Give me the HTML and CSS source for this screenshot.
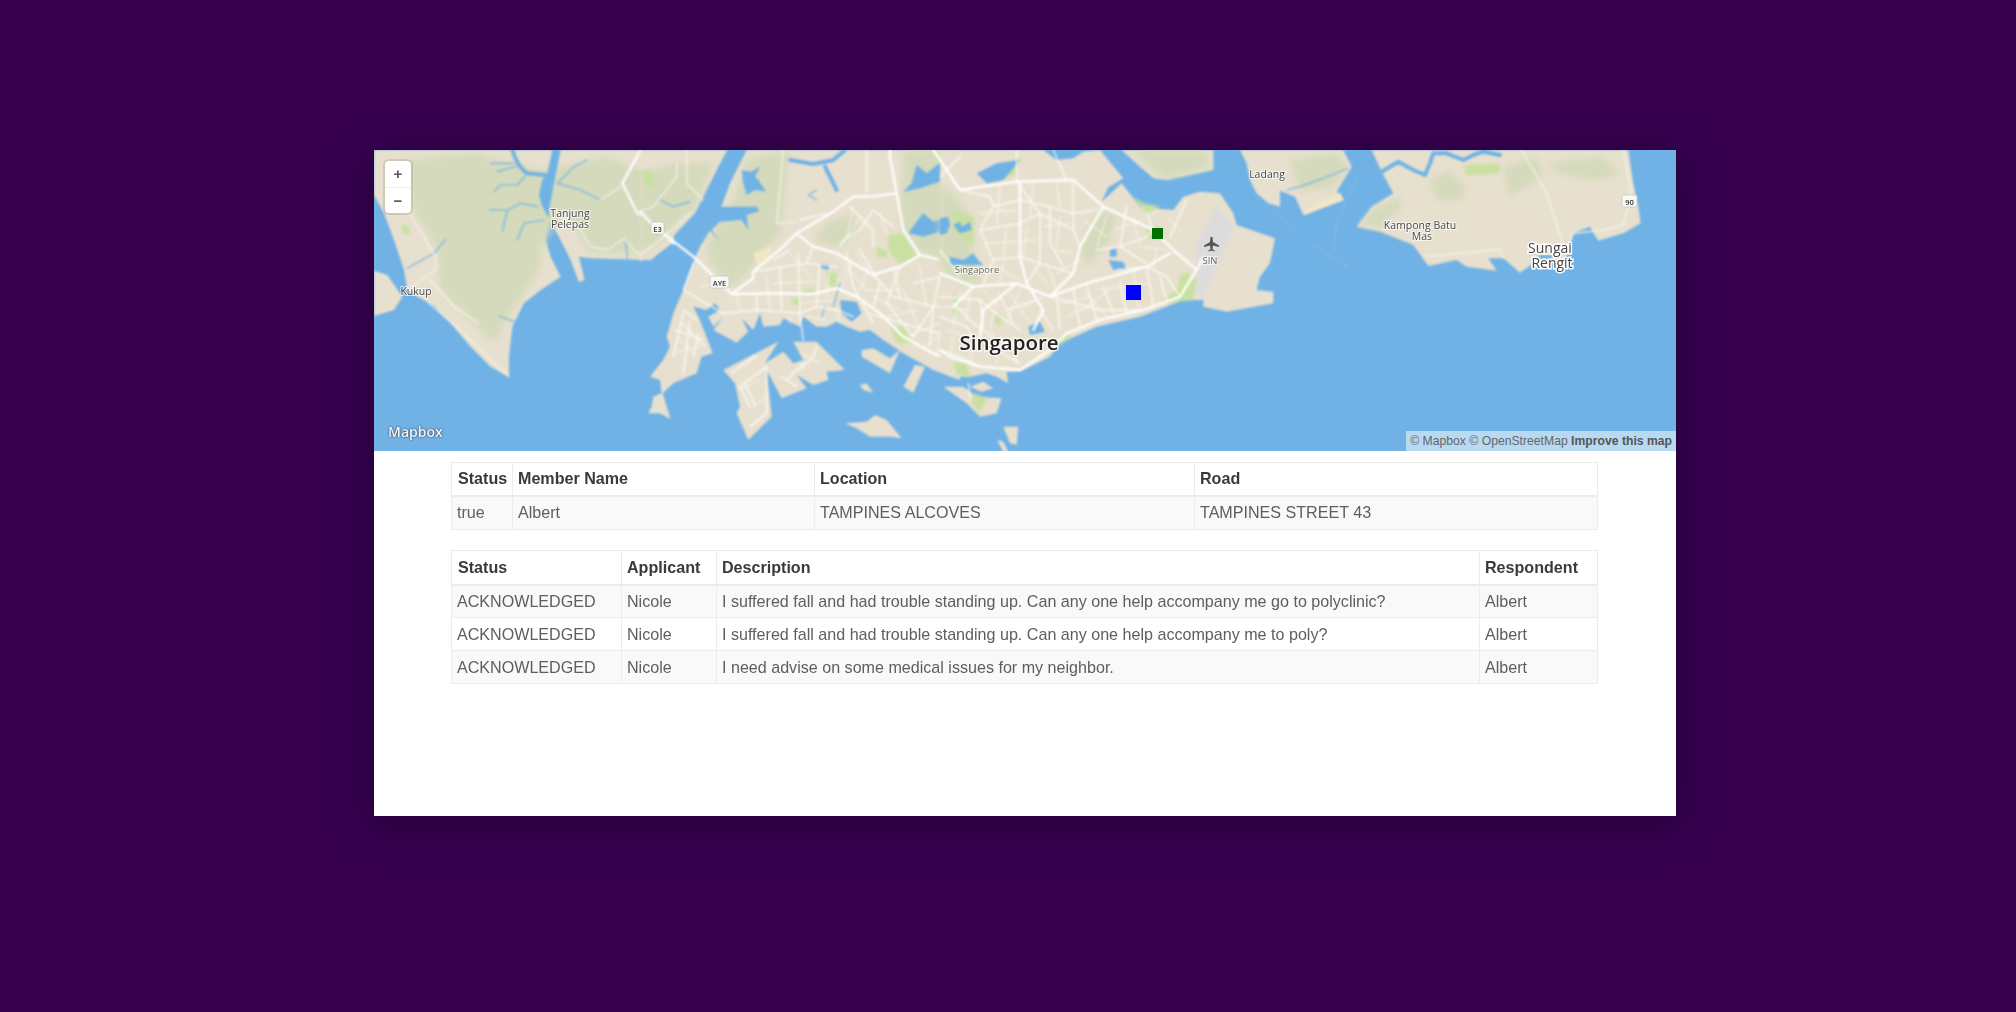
FILE: index.html
```html
<!DOCTYPE html>
<html>
<head>
    <title>Community map</title>
    <link rel="stylesheet" href="styles.css">
</head>
<body>
    <div class="card">
        <div class="map">
            <svg class="map-art" viewBox="374 150 1302 301" width="1302" height="301">
                <g class="map-shapes">
                <rect class="water" x="374" y="150" width="1302" height="301"/>

                <!-- west johor, zoom coords -->
                <g transform="translate(374 150) scale(.3333)">
                    <polygon class="land" points="0,0 900,0 900,275 830,330 650,325 615,320 632,390 615,397 590,330 555,260 520,200 515,270 530,320 560,380 500,420 450,460 415,530 405,620 405,682 350,650 290,590 230,520 180,465 130,440 100,420 90,360 60,270 30,190 0,135"/>
                    <polygon class="land" points="0,362 40,375 85,440 60,480 0,498"/>
                    <polygon class="veg" points="100,30 300,10 500,60 700,20 890,100 880,250 820,310 650,310 600,230 560,180 500,300 500,350 440,440 400,500 360,580 300,520 200,420 190,300 120,180"/>
                    <polygon class="park" points="785,70 830,60 840,105 820,110"/>
                    <polygon class="park" points="80,225 100,225 110,250 92,255"/>
                    <polygon class="water" points="520,70 535,0 560,0 540,100 525,180 525,205 505,170 495,135 505,90"/>
                    <path class="river-lg" d="M415 0Q430 50 460 70L515 75"/>
                    <path class="river" d="M460 70L430 105 380 105 360 125M420 40L350 40M440 45L370 65M490 170L440 160 400 180 345 180M400 180L385 245M510 210L450 220 430 270M550 100L600 50 640 30M550 100L620 120 680 150M215 268L180 310 100 355M375 498L420 515M755 270L760 325"/>
                    <path class="road-soft" d="M110 195L185 320 185 360 140 390 110 415M170 390L240 470 315 520M150 445L290 570 405 680M620 240L650 290 700 300 750 265 790 310 900 220M620 240L560 200M680 150L740 110"/>
                    <path class="road" d="M800 0L745 100 790 190 900 280"/>
                </g>

                <!-- singapore west, zoom coords -->
                <g transform="translate(640 150) scale(.3333)">
                    <polygon class="land" points="0,0 262,0 230,60 165,190 60,300 0,335"/>
                    <polygon class="veg" points="0,70 100,40 220,40 165,170 60,280 0,310"/>
                    <polygon class="land" points="160,335 130,420 100,490 80,560 90,590 70,630 30,680 60,690 65,730 40,740 35,770 25,790 60,790 92,808 68,730 100,700 170,670 185,620 218,610 180,510 160,470 200,480 225,460 240,480 205,500 220,530 250,500 220,540 290,578 325,545 305,505 340,540 360,490 370,530 420,525 430,505 480,530 490,500 530,530 560,530 590,515 620,530 660,545 690,540 730,570 790,610 880,660 960,690 960,0 320,0 270,100 230,210 180,290"/>
                    <polygon class="land" points="250,660 415,575 375,640 430,605 460,640 490,630 460,575 530,575 615,660 560,665 565,690 520,705 470,675 500,715 425,745 380,660 395,800 325,870 290,790 300,770 285,700"/>
                    <polygon class="land" points="665,600 700,595 750,625 780,600 750,670 665,620"/>
                    <polygon class="land" points="825,645 855,650 820,728 790,710"/>
                    <polygon class="land" points="660,705 680,700 700,728 670,720"/>
                    <polygon class="land" points="615,820 680,815 705,795 740,810 785,865 750,860 690,860 650,835"/>
                    <polygon class="veg" points="200,280 280,150 320,30 450,0 420,250 330,360 280,410 210,340"/>
                    <polygon class="veg" points="790,0 960,0 960,340 880,320 830,300 780,230"/>
                    <polygon class="veg" points="560,220 640,190 650,240 600,290 520,270"/>
                    <polygon class="sand" points="340,310 400,285 380,340 350,350"/>
                    <polygon class="park" points="0,60 30,60 45,105 20,110"/>
                    <polygon class="park" points="745,255 790,250 830,320 780,345 745,300"/>
                    <polygon class="park" points="920,180 960,180 960,280 930,270"/>
                    <polygon class="park" points="708,290 735,300 745,322 712,322"/>
                    <polygon class="park" points="455,445 480,445 480,465 458,465"/>
                    <polygon class="park" points="490,420 525,415 520,430 490,432"/>
                    <polygon class="park" points="560,360 590,370 590,410 565,405"/>
                    <polygon class="park" points="750,530 790,530 820,580 770,580"/>
                    <polygon class="park" points="895,620 950,625 945,640 900,635"/>
                    <polygon class="park" points="940,650 960,640 960,670 945,670"/>
                    <polygon class="water" points="305,60 335,65 360,50 345,80 355,90 378,125 345,120 320,135 310,100"/>
                    <polygon class="water" points="240,170 350,170 358,183 320,195 325,240 305,210 240,215 215,240 240,275 190,220"/>
                    <polygon class="water" points="790,125 815,100 830,45 860,70 905,35 915,90 840,115"/>
                    <polygon class="water" points="805,250 830,215 850,190 880,215 930,200 915,240 850,260"/>
                    <polygon class="water" points="600,450 650,455 665,490 635,515 605,490"/>
                    <polygon class="water" points="540,340 570,345 565,360 545,355"/>
                    <polygon class="water" points="930,325 960,320 960,345 940,345"/>
                    <path class="river-lg" d="M450 30L520 42 580 30 615 0M555 50L590 120"/>
                    <path class="river" d="M530 120L505 135 530 150M600 400L580 470M555 470L545 500M60 150L100 170 150 155"/>
                    <path class="road-soft" d="M140 0L140 100 190 150M110 40L110 80 40 170 0 185M0 315L60 270 150 190M430 0L410 220 470 215"/>
                    <path class="road-sm" d="M130 480L170 510M105 540L190 570M130 490L100 620M150 510L130 670M175 550L160 620M125 520L195 590M345 615L275 670M380 650L300 710 330 770M380 650L380 790 330 830M315 700L345 765M490 640L440 690 420 680M530 590L520 620 480 660M440 690L470 710M160 340L130 420 250 490 350 480 480 490 530 470 590 480 640 500M340 365L430 350 500 340 590 350M420 350L425 480M475 310L480 500 490 570M520 290L500 340M350 430L350 485M540 340L530 470M600 290L610 270 660 240 700 180 760 230M630 170L700 240 700 290M620 310L640 410 700 520M660 300L720 400 700 470M780 350L740 460 820 560M820 400L900 380 960 400M760 440L880 470 960 470M820 560L880 470 900 380M690 490L960 570M880 470L870 590M400 330L450 300M680 0L680 130M760 350L780 440M700 375L760 440M480 210L560 190"/>
                    <path class="road-fine" d="M380 380L390 480M450 310L510 380M400 400L530 395M290 430L300 480M480 460L580 450M570 350L560 440M610 340L680 420M620 360L590 400M640 340L600 420M650 310L690 370M690 350L660 420M680 420L780 420M700 440L780 480M740 500L830 480M790 420L840 540M840 350L860 470M900 330L920 470M930 400L940 520M800 560L900 520M850 590L960 520M890 610L900 540M180 410L240 400M200 360L270 420M450 500L450 520M500 500L560 510M590 480L600 520M110 560L170 620M100 610L180 590M350 620L310 650M300 720L360 690M340 770L380 740M480 610L540 640M640 170L620 260M660 200L610 280M720 190L740 250"/>
                    <path class="road" d="M0 185L50 235 160 320 275 432M275 432L430 430 520 432 590 415 650 440 720 490 790 560 880 610 960 640M275 432L340 385 340 365 430 290 470 250 580 185 640 140 690 140 770 130M770 130L750 20 750 0M470 250L520 290 590 310 640 340 700 375 780 350 840 315 900 330 960 380M770 130L790 240 840 315M880 0L920 60 960 100"/>
                </g>

                <!-- singapore east, zoom coords -->
                <g transform="translate(940 150) scale(.3333)">
                    <polygon class="land" points="0,0 310,0 350,30 400,25 430,5 480,0 550,85 505,112 485,155 545,100 600,170 640,175 700,180 730,140 780,125 840,130 880,190 890,225 1005,265 990,340 960,380 950,420 1000,425 1000,460 860,485 790,470 790,450 730,450 600,500 470,530 360,580 330,620 240,665 200,665 205,700 170,680 140,670 90,680 30,680 0,660"/>
                    <polygon class="land" points="545,0 820,0 820,60 680,90 640,85 600,50"/>
                    <polygon class="land" points="10,710 70,710 110,740 185,745 170,790 120,800 80,760"/>
                    <polygon class="land" points="90,710 130,695 160,715 125,725"/>
                    <polygon class="land" points="190,830 235,830 230,885 210,880"/>
                    <polygon class="land" points="172,870 190,875 205,906 190,906"/>
                    <polygon class="land" points="900,0 1020,0 1020,170 985,160 950,130 930,90 920,40"/>
                    <polygon class="veg" points="0,100 50,140 100,210 95,300 120,400 60,400 0,350"/>
                    <polygon class="veg" points="420,300 470,190 530,190 510,270 440,350"/>
                    <polygon class="veg" points="580,0 800,0 810,50 680,85 640,60"/>
                    <polygon class="runway" points="770,280 830,165 865,210 880,230 870,260 830,350 790,450 770,430"/>
                    <polygon class="park" points="40,180 100,200 100,290 40,240"/>
                    <polygon class="park" points="150,60 240,20 225,75 160,100"/>
                    <polygon class="park" points="570,135 610,160 660,170 620,190"/>
                    <polygon class="park" points="620,235 670,235 665,268 620,265"/>
                    <polygon class="park" points="720,375 755,365 740,410 715,410"/>
                    <polygon class="park" points="660,460 720,410 770,380 760,450 700,455"/>
                    <polygon class="park" points="360,560 400,555 360,585"/>
                    <polygon class="park" points="40,640 80,640 90,680 50,675"/>
                    <polygon class="park" points="165,495 185,500 180,530 165,520"/>
                    <polygon class="park" points="40,440 60,440 55,495 40,490"/>
                    <polygon class="park" points="100,730 140,745 120,790 95,760"/>
                    <polygon class="water" points="0,205 25,200 30,225 20,250 0,255"/>
                    <polygon class="water" points="40,225 60,215 65,230 90,215 95,240 60,250"/>
                    <polygon class="water" points="110,70 170,40 240,30 190,90 140,100"/>
                    <polygon class="water" points="30,320 70,330 100,310 110,325 130,345 30,345"/>
                    <polygon class="water" points="505,330 550,335 560,360 520,360"/>
                    <polygon class="water" points="510,300 530,295 530,320 510,320"/>
                    <polygon class="water" points="265,530 300,515 315,545 270,555"/>
                    <path class="road-sm" d="M160 170L120 240 160 330 130 400M230 95L300 190 300 340 260 400M160 170L240 150 330 170 400 190 470 180M120 240L240 220 300 190 400 240 420 290M160 330L240 320 300 340 400 370M400 90L400 240M330 170L330 280 370 350M60 120L150 140 160 170M470 300L540 290 620 340M540 290L620 260 640 240M560 170L540 290M620 190L640 240M530 360L620 350 680 380 720 440M440 400L470 510M490 410L520 490M540 400L560 490M620 350L640 470M660 380L680 450M350 440L360 540M400 420L420 530M330 440L480 480 610 480M0 440L120 450 180 500 240 540M40 460L100 520 160 560M0 500L80 530 120 600M120 450L130 530M180 440L220 520M0 600L60 620 120 650M300 480L340 540M200 480L290 450M60 20L0 80M230 0L230 95M340 0L380 90M0 300L60 380M170 600L240 640M740 150L690 260M85 700L90 740"/>
                    <path class="road-fine" d="M130 130L200 190M180 110L170 220M280 100L270 200M350 100L360 170M120 190L230 180M200 230L190 320M260 230L250 320M140 280L290 270M310 230L390 220M360 200L350 290M340 300L400 310M170 350L240 390M190 340L180 400M280 350L320 400M320 340L350 420M350 370L420 330M360 460L450 440M380 500L470 460M430 420L500 500M510 420L420 480M570 400L600 480M470 420L620 400M580 370L600 440M520 240L610 210M580 200L600 290M610 290L680 300M650 300L640 350M130 420L180 470M60 430L40 530M90 430L80 510M10 470L80 480M20 540L110 570M170 450L150 540M210 430L270 520M240 420L200 520M250 470L310 440M140 560L220 590M180 560L170 640M220 560L230 640M90 600L100 650M260 600L310 580M40 560L30 620M500 200L470 290M430 210L500 260M650 180L630 200M680 200L720 240"/>
                    <path class="road" d="M0 30L60 120 230 95 400 90 490 170 640 240 700 300 770 360 720 440 610 480 480 510 380 550 330 600 240 660 120 650 30 620 0 600M0 370L100 410 230 400 330 440 440 400 620 350 690 310M490 170L420 290 400 370 330 440M240 100L240 320 260 400 310 480 280 540M770 360L790 320M100 410L40 470M230 400L130 480 120 560"/>
                </g>

                <!-- east johor, zoom coords -->
                <g transform="translate(1270 150) scale(.3333)">
                    <polygon class="land" points="0,0 220,0 245,50 200,125 220,150 100,195 75,140 0,110"/>
                    <polygon class="veg" points="60,30 200,10 235,50 190,110 90,125"/>
                    <polygon class="sand" points="105,180 210,128 222,150 105,195"/>
                    <polygon class="land" points="305,0 335,65 370,130 305,170 260,230 330,245 430,285 475,348 560,330 590,350 680,362 655,325 700,325 750,368 790,340 880,335 910,250 960,230 985,272 1060,250 1112,220 1105,170 1090,100 1075,0"/>
                    <polygon class="veg" points="270,225 320,170 395,140 395,170 330,235"/>
                    <polygon class="veg" points="480,90 540,60 590,120 570,150 500,150"/>
                    <polygon class="veg" points="700,50 800,20 820,80 720,140"/>
                    <polygon class="veg" points="830,40 1000,20 1050,80 950,90 870,70"/>
                    <polygon class="park" points="580,45 690,40 688,70 590,78"/>
                    <path class="river-lg" d="M335 65L385 35 430 60 465 75 480 40 490 10 530 10 580 30 610 15 640 5 690 15"/>
                    <path class="river" d="M50 120L90 110 160 85 235 55"/>
                    <path class="road-soft" d="M755 0L830 130 880 285M470 320L690 298 700 325M880 335L910 250 1000 240 1060 225 1085 130 1060 0"/>
                    <polygon class="water" points="805,315 850,315 845,328 810,328"/>
                    <path class="land-line" d="M15 185L70 232M130 285L235 355 190 300 200 220 260 80"/>
                </g>
                </g>

                <g class="map-labels">
                    <text class="label" x="570" y="217">Tanjung</text>
                    <text class="label" x="570" y="228">Pelepas</text>
                    <text class="label" x="416" y="295">Kukup</text>
                    <text class="label label-sm" x="977" y="273">Singapore</text>
                    <text class="label label-sm" x="1210" y="264">SIN</text>
                    <text class="label" x="1267" y="178">Ladang</text>
                    <text class="label" x="1420" y="229">Kampong Batu</text>
                    <text class="label" x="1422" y="240">Mas</text>
                    <text class="label label-md" x="1550" y="253">Sungai</text>
                    <text class="label label-md" x="1552" y="268">Rengit</text>
                    <text class="label label-city" x="1009" y="350">Singapore</text>

                    <rect class="shield" x="651" y="222" width="13" height="12" rx="2"/>
                    <text class="shield-text" x="657.500" y="231.500">E3</text>
                    <rect class="shield" x="710" y="276" width="19" height="12" rx="2"/>
                    <text class="shield-text" x="719.500" y="285.500">AYE</text>
                    <rect class="shield" x="1622" y="195" width="15" height="12" rx="2"/>
                    <text class="shield-text" x="1629.500" y="204.500">90</text>

                    <!-- plane -->
                    <path class="plane" d="M1210.500 237L1212.500 237 1213 242 1219 245.500 1219 247 1213 245.500 1212.500 249 1214.500 250.500 1214.500 251.500 1211.500 250.500 1208.500 251.500 1208.500 250.500 1210.500 249 1210 245.500 1204 247 1204 245.500 1210 242Z"/>
                </g>
            </svg>

            <div class="zoom-box">
                <div class="zoom-btn">+</div>
                <div class="zoom-btn">−</div>
            </div>
            <div class="pin pin-green"></div>
            <div class="pin pin-blue"></div>
            <div class="logo">Mapbox</div>
            <div class="attrib">© Mapbox © OpenStreetMap <b>Improve this map</b></div>
        </div>

        <div class="tables">
            <table class="grid">
                <thead>
                    <tr>
                        <th class="w61">Status</th>
                        <th class="w302">Member Name</th>
                        <th class="w380">Location</th>
                        <th>Road</th>
                    </tr>
                </thead>
                <tbody>
                    <tr>
                        <td>true</td>
                        <td>Albert</td>
                        <td>TAMPINES ALCOVES</td>
                        <td>TAMPINES STREET 43</td>
                    </tr>
                </tbody>
            </table>

            <table class="grid">
                <thead>
                    <tr>
                        <th class="w170">Status</th>
                        <th class="w95">Applicant</th>
                        <th class="w763">Description</th>
                        <th>Respondent</th>
                    </tr>
                </thead>
                <tbody>
                    <tr>
                        <td>ACKNOWLEDGED</td>
                        <td>Nicole</td>
                        <td>I suffered fall and had trouble standing up. Can any one help accompany me go to polyclinic?</td>
                        <td>Albert</td>
                    </tr>
                    <tr>
                        <td>ACKNOWLEDGED</td>
                        <td>Nicole</td>
                        <td>I suffered fall and had trouble standing up. Can any one help accompany me to poly?</td>
                        <td>Albert</td>
                    </tr>
                    <tr>
                        <td>ACKNOWLEDGED</td>
                        <td>Nicole</td>
                        <td>I need advise on some medical issues for my neighbor.</td>
                        <td>Albert</td>
                    </tr>
                </tbody>
            </table>
        </div>
    </div>
</body>
</html>
```
FILE: styles.css
```css
html, body {
    margin: 0;
    padding: 0;
}

body {
    height: 1012px;
    overflow: hidden;
    background: #36004f;
    font-family: "Liberation Sans", Arial, sans-serif;
}

.card {
    width: 1302px;
    height: 666px;
    margin: 150px 0 0 374px;
    background: #fff;
    box-shadow: 0 6px 36px rgba(0, 0, 0, 0.35);
}

/* map */
.map {
    position: relative;
    height: 301px;
    overflow: hidden;
    background: #70b2e5;
}

.map-art {
    display: block;
}

.map-shapes { filter: blur(0.8px); }
.map-labels { filter: blur(0.35px); }

.water { fill: #70b2e5; }
.land { fill: #e8e0cf; }
.veg { fill: #d4dabb; filter: blur(9px); }
.park { fill: #c8e0a0; filter: blur(3px); }
.sand { fill: #f1e6c6; }
.runway { fill: #dcdcdc; filter: blur(3px); }

.road, .road-sm, .road-fine, .road-soft, .river, .river-lg, .land-line {
    fill: none;
    stroke-linejoin: round;
    stroke-linecap: round;
}
.road { stroke: #fff; stroke-width: 7; }
.road-sm { stroke: #fff; stroke-width: 4; opacity: 0.85; }
.road-fine { stroke: #fff; stroke-width: 3; opacity: 0.7; }
.road-soft { stroke: #f4f2ea; stroke-width: 4; }
.river { stroke: #70b2e5; stroke-width: 3.5; }
.river-lg { stroke: #70b2e5; stroke-width: 12; }
.land-line { stroke: #8fc0e6; stroke-width: 2; }

.label {
    font-family: "Open Sans", sans-serif;
    font-size: 10.5px;
    fill: #444;
    text-anchor: middle;
    stroke: #fff;
    stroke-width: 2px;
    stroke-opacity: 0.7;
    paint-order: stroke;
}
.label-sm { font-size: 9.5px; fill: #666; }
.label-md { font-size: 14px; stroke-width: 3px; stroke-opacity: 1; }
.label-city {
    font-size: 20.5px;
    font-weight: 600;
    fill: #222;
    stroke-width: 3px;
}

.shield {
    fill: #f8f8f6;
    stroke: #bbb;
    stroke-width: 0.6;
}
.shield-text {
    font-family: "Open Sans", sans-serif;
    font-size: 7.5px;
    font-weight: 600;
    fill: #333;
    text-anchor: middle;
}
.plane { fill: #555; }

.zoom-box {
    position: absolute;
    left: 11px;
    top: 11px;
    width: 26px;
    height: 52px;
    background: #fff;
    border-radius: 4px;
    box-shadow: 0 0 0 2px rgba(0, 0, 0, 0.1);
    filter: blur(0.4px);
}
.zoom-btn {
    height: 26px;
    line-height: 25px;
    text-align: center;
    font-size: 15px;
    font-weight: bold;
    color: #555;
}
.zoom-btn + .zoom-btn {
    border-top: 1px solid #f0f0f0;
    height: 25px;
}

.pin {
    position: absolute;
}
.pin-green {
    left: 778px;
    top: 78px;
    width: 11px;
    height: 11px;
    background: #007000;
}
.pin-blue {
    left: 752px;
    top: 135px;
    width: 15px;
    height: 15px;
    background: #0000ff;
}

.logo {
    position: absolute;
    left: 14px;
    bottom: 10px;
    font-family: "Open Sans", sans-serif;
    font-size: 14px;
    font-weight: 600;
    color: #fff;
    opacity: 0.9;
    text-shadow: 0 0 2px #334, 0 0 1px #334;
    filter: blur(0.4px);
}

.attrib {
    position: absolute;
    right: 0;
    bottom: 0;
    height: 20px;
    line-height: 20px;
    padding: 0 4px;
    font-size: 12.2px;
    color: #666;
    background: rgba(255, 255, 255, 0.5);
}
.attrib b { color: #555; }

/* tables */
.tables {
    padding: 11px 77px 0;
    filter: blur(0.4px);
}

.grid {
    width: 1147px;
    margin-bottom: 20px;
    table-layout: fixed;
    border-collapse: collapse;
    font-size: 16.1px;
}

.grid th, .grid td {
    box-sizing: border-box;
    padding: 0 5px;
    height: 33px;
    text-align: left;
    border: 1px solid #ececec;
    white-space: nowrap;
}

.grid th {
    color: #3a3a3a;
    border-bottom-width: 2px;
}

.grid th:first-child { padding-left: 6px; }

.grid:first-child td { height: 34px; }

.grid + .grid th { height: 34px; }

.grid td { color: #5e5e5e; }

.grid tbody tr:nth-child(odd) { background: #f9f9f9; }

.w61 { width: 61px; }
.w95 { width: 95px; }
.w170 { width: 170px; }
.w302 { width: 302px; }
.w380 { width: 380px; }
.w763 { width: 763px; }
```
